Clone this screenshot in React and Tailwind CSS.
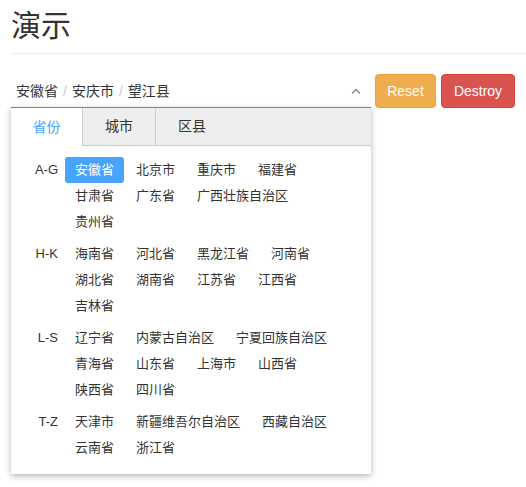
import React from 'react';

const groups = [
  { label: 'A-G', items: ['安徽省', '北京市', '重庆市', '福建省', '甘肃省', '广东省', '广西壮族自治区', '贵州省'] },
  { label: 'H-K', items: ['海南省', '河北省', '黑龙江省', '河南省', '湖北省', '湖南省', '江苏省', '江西省', '吉林省'] },
  { label: 'L-S', items: ['辽宁省', '内蒙古自治区', '宁夏回族自治区', '青海省', '山东省', '上海市', '山西省', '陕西省', '四川省'] },
  { label: 'T-Z', items: ['天津市', '新疆维吾尔自治区', '西藏自治区', '云南省', '浙江省'] },
];

const font = { fontFamily: '"Liberation Sans", "Noto Sans CJK SC", sans-serif' };

const App = () => {
  return (
    <div className="min-h-screen bg-white pl-[11px] text-[#333]" style={font}>
      <h1 className="pt-[8px] pb-[9px] text-[30px] leading-[36px] font-normal border-b border-[#eee]">演示</h1>

      <div className="mt-[20px] flex items-start">
        {/* picker */}
        <div className="relative w-[360px] h-[34px]">
          <div className="h-full flex items-center pl-[5px] pr-[10px] text-[14px]">
            <span>安徽省</span>
            <span className="mx-[5px] text-[#ccc]">/</span>
            <span>安庆市</span>
            <span className="mx-[5px] text-[#ccc]">/</span>
            <span>望江县</span>
            <svg className="ml-auto" width="10" height="6" viewBox="0 0 10 6" fill="none">
              <path d="M1 5.5L5 1.5L9 5.5" stroke="#888" strokeWidth="1.3" />
            </svg>
          </div>

          {/* dropdown */}
          <div className="absolute left-0 top-[33px] z-10 w-[360px] bg-white border-t border-[#4a90d9] shadow-[0_2px_6px_rgba(0,0,0,0.3)]">
            <div className="flex h-[38px] bg-[#eee] border-b border-[#ccc] text-[14px]">
              <div className="w-[72px] -mb-px bg-white border-r border-[#ccc] flex items-center justify-center text-[#46a4ff]">省份</div>
              <div className="w-[73px] border-r border-[#ccc] flex items-center justify-center">城市</div>
              <div className="px-[22px] flex items-center">区县</div>
            </div>

            <div className="pt-[11px] pb-[13px] pl-[10px] flex flex-col gap-[6px] text-[13px]">
              {groups.map((g) => (
                <div key={g.label} className="flex">
                  <div className="w-[37px] shrink-0 text-right leading-[26px]">{g.label}</div>
                  <div className="ml-[7px] w-[280px] flex flex-wrap gap-x-[2px]">
                    {g.items.map((it) => (
                      <span
                        key={it}
                        className={
                          it === '安徽省'
                            ? 'h-[26px] leading-[26px] px-[10px] rounded-[3px] bg-[#46a4ff] text-white'
                            : 'h-[26px] leading-[26px] px-[10px] rounded-[3px]'
                        }
                      >
                        {it}
                      </span>
                    ))}
                  </div>
                </div>
              ))}
            </div>
          </div>
        </div>

        <button className="ml-[4px] w-[61px] h-[34px] text-[14px] text-white bg-[#f0ad4e] border border-[#eea236] rounded-[4px]">Reset</button>
        <button className="ml-[5px] w-[74px] h-[34px] text-[14px] text-white bg-[#d9534f] border border-[#d43f3a] rounded-[4px]">Destroy</button>
      </div>
    </div>
  );
};

export default App;
